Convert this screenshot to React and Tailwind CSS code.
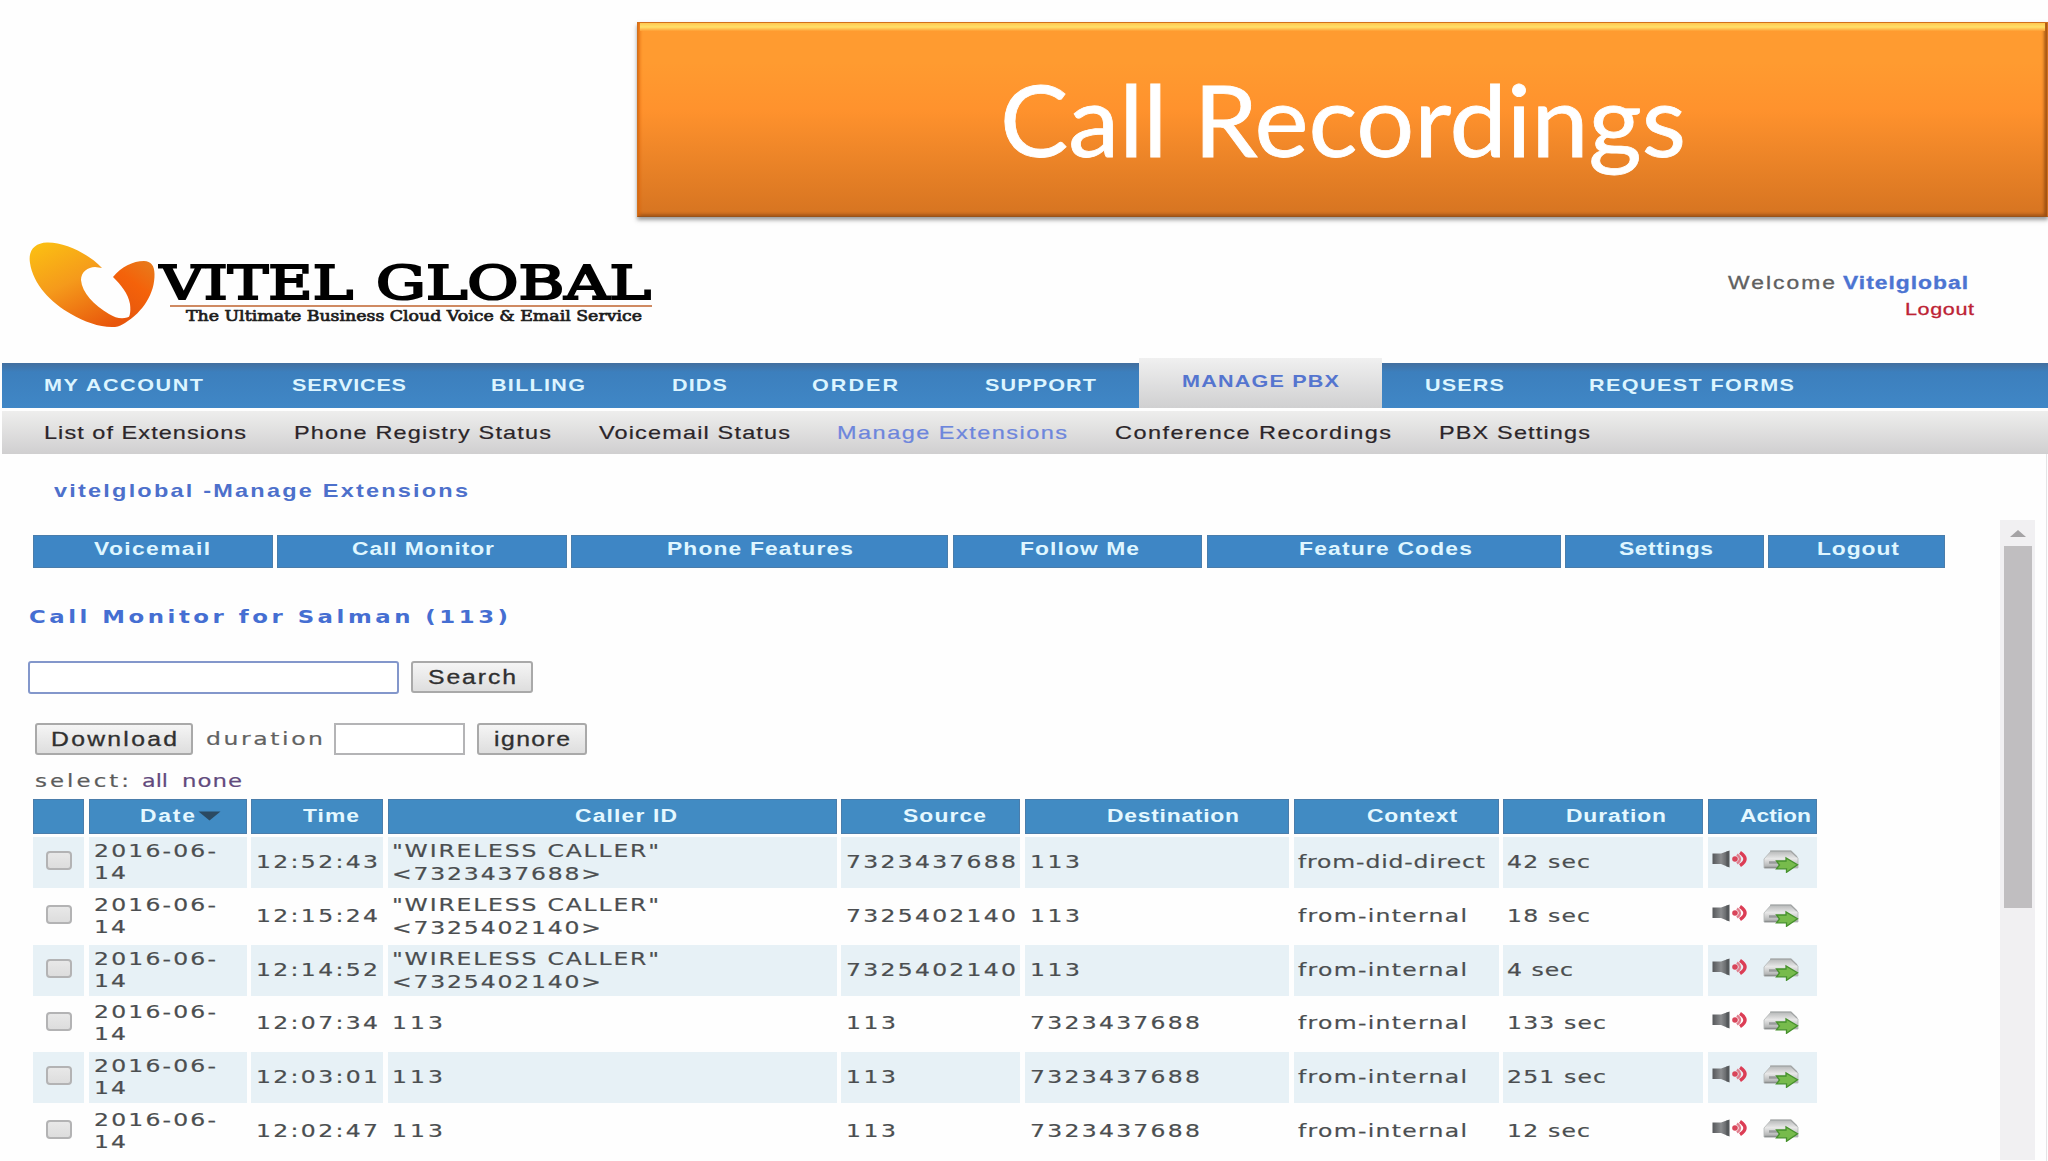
import { useId, useLayoutEffect, useRef, useState } from "react";

/* A single line of text stretched sideways to a given width. */
function Fit({ w, children, className = "", stretch = 1.27 }) {
  const ref = useRef(null);
  const [style, setStyle] = useState({});
  useLayoutEffect(() => {
    const natural = ref.current.getBoundingClientRect().width;
    const gaps = Math.max(1, String(children).length - 1);
    const spacing = Math.max(0, (w / stretch - natural) / gaps);
    setStyle({
      letterSpacing: `${spacing}px`,
      transform: `scaleX(${w / (natural + spacing * gaps)})`,
    });
  }, []);
  return (
    <span className={`block shrink-0 text-left whitespace-nowrap ${className}`} style={{ width: w }}>
      <span ref={ref} className="inline-block origin-left whitespace-pre align-top" style={style}>
        {children}
      </span>
    </span>
  );
}

const sans = "font-['Liberation_Sans',Arial,sans-serif]";
const wide = "font-['DejaVu_Sans',Verdana,sans-serif]";
const serif = "font-['DejaVu_Serif',serif]";

function LogoMark() {
  const id = useId();
  return (
    <svg className="mt-[2px] h-[88px] w-[128px] shrink-0" viewBox="0 0 128 88">
      <defs>
        <linearGradient id={id + "a"} x1="0.15" y1="0" x2="0.75" y2="1">
          <stop offset="0" stopColor="#fbbd13" />
          <stop offset="0.45" stopColor="#f59a1b" />
          <stop offset="1" stopColor="#e8560b" />
        </linearGradient>
        <linearGradient id={id + "b"} x1="0.8" y1="0" x2="0.3" y2="1">
          <stop offset="0" stopColor="#e8791a" />
          <stop offset="0.4" stopColor="#f4620a" />
          <stop offset="1" stopColor="#e5560e" />
        </linearGradient>
      </defs>
      <path
        d="M73 27C60 13 36 1 18 1.500C5 2-1 10 1 22C4 43 22 62 42 73C56 81 72 87 86 86C94 85 99 80 103 74C96 79 88 78 80 73C65 64 53 52 52 39C52 31 59 26 66 26Z"
        fill={`url(#${id}a)`}
      />
      <path
        d="M84 36C92 26 104 20 115 20C122 20 125.500 25 125.500 33C126 52 114 71 96 82C101 77 102 71 101 63C99 52 92 44 84 36Z"
        fill={`url(#${id}b)`}
      />
    </svg>
  );
}

function Speaker() {
  const id = useId();
  return (
    <svg className="h-[18px] w-[36px]" viewBox="0 0 36 18">
      <defs>
        <linearGradient id={id} x1="0" x2="1">
          <stop offset="0" stopColor="#55575a" />
          <stop offset="0.5" stopColor="#8b8d8f" />
          <stop offset="1" stopColor="#505356" />
        </linearGradient>
      </defs>
      <path d="M0.500 3.500H9L17.500 0.500V17.500L9 14H0.500Z" fill={`url(#${id})`} />
      <path d="M15.500 1.500V16.500" stroke="#55585b" strokeWidth="2" />
      <circle cx="23" cy="9" r="2.800" fill="#d9455a" />
      <path d="M25 4.500Q31 9 25 13.500" fill="none" stroke="#e07c8b" strokeWidth="2.500" />
      <path d="M28 2.500Q38 9 28 15.500" fill="none" stroke="#dc3d55" strokeWidth="3.500" />
    </svg>
  );
}

function DriveArrow() {
  const id = useId();
  return (
    <svg className="h-[23px] w-[36px]" viewBox="0 0 36 23">
      <defs>
        <linearGradient id={id} x1="0" y1="0" x2="0" y2="1">
          <stop offset="0" stopColor="#b5b7b7" />
          <stop offset="0.45" stopColor="#e8e8e8" />
          <stop offset="1" stopColor="#a8aaaa" />
        </linearGradient>
      </defs>
      <path d="M8 1H28L35 8V18H1V9Z" fill={`url(#${id})`} stroke="#b4b7b7" strokeWidth="0.800" />
      <path d="M7 1.200H28L34 7" fill="none" stroke="#a3a6a6" strokeWidth="1.300" />
      <path d="M1.500 17.500H18" stroke="#8d9090" strokeWidth="1.500" />
      <path d="M6 12.500H15" stroke="#989b9b" strokeWidth="2.500" />
      <path
        d="M13.500 11H23V8L34.500 14.800L23.500 22.300V18.800H13.500L16.500 15Z"
        fill="#77bb4c"
        stroke="#46912c"
        strokeWidth="1.300"
      />
    </svg>
  );
}

function Banner() {
  return (
    <header className="relative ml-[637px] h-[195px] border border-[#d2701b] border-b-[#98531b] bg-linear-to-b from-[#ff9b30] from-20% via-[#ff922d] via-45% to-[#d67421] shadow-[0_3px_4px_rgba(60,60,60,0.5),inset_3px_0_3px_-1px_rgba(220,100,10,0.7),inset_-4px_0_3px_-1px_rgba(150,75,15,0.8),inset_0_-3px_3px_-1px_rgba(150,80,25,0.7)]">
      <div className="mx-[2px] h-[8px] bg-linear-to-b from-[#ffc64e] via-[#ffe068] to-[#ff9e34]" />
      <div className="pl-[362px]">
        <Fit w={686} stretch={1.1} className="mt-[29px] font-['Lato','Open_Sans',sans-serif] text-[99px] leading-[118px] text-white [-webkit-text-stroke:0.8px]">
          Call Recordings
        </Fit>
      </div>
    </header>
  );
}

function Brand() {
  return (
    <div className="flex h-[141px] pt-[22px] pl-[29px]">
      <LogoMark />
      <div className="ml-[3px] pt-[16px]">
        <div className={`flex gap-[23px] ${serif} text-[47px] leading-[56px] text-black [-webkit-text-stroke:2.2px]`}>
          <Fit w={193} stretch={1.5}>VITEL</Fit>
          <Fit w={275} stretch={1.5}>GLOBAL</Fit>
        </div>
        <div className="-mt-[6px] ml-[10px] h-[2px] w-[482px] bg-[#cf8a62]" />
        <div className={`ml-[26px] ${serif} text-[15px] leading-[18px] text-[#1c1c1c] [-webkit-text-stroke:0.7px]`}>
          <Fit w={456}>{"The Ultimate Business Cloud Voice & Email Service"}</Fit>
        </div>
      </div>
      <div className={`mr-[74px] ml-auto flex flex-col items-end pt-[34px] ${sans} text-[18px] leading-[20px] [-webkit-text-stroke:0.3px]`}>
        <div className="mr-[6px] flex gap-[8px]">
          <Fit w={107} className="text-[#606060]">Welcome</Fit>
          <Fit w={125} className="font-bold text-[#4c74d2]">Vitelglobal</Fit>
        </div>
        <Fit w={69} className="mt-[7px] text-[17px] text-[#bd2335]">Logout</Fit>
      </div>
    </div>
  );
}

function NavText({ w, ml, children }) {
  return (
    <div className={ml}>
      <Fit w={w}>{children}</Fit>
    </div>
  );
}

function MainNav() {
  return (
    <nav className={`ml-[2px] flex h-[50px] items-end ${sans} text-[17px] leading-[18px] font-bold text-[#dcf5ff]`}>
      <div className="flex h-[45px] w-[1137px] bg-linear-to-b from-[#426f9f] via-[#3c7fbd] via-20% to-[#4087c6] pt-[14px]">
        <NavText ml="ml-[42px]" w={159}>MY ACCOUNT</NavText>
        <NavText ml="ml-[89px]" w={114}>SERVICES</NavText>
        <NavText ml="ml-[85px]" w={94}>BILLING</NavText>
        <NavText ml="ml-[87px]" w={55}>DIDS</NavText>
        <NavText ml="ml-[85px]" w={86}>ORDER</NavText>
        <NavText ml="ml-[87px]" w={111}>SUPPORT</NavText>
      </div>
      <div className="h-[50px] w-[243px] bg-linear-to-b from-[#f0f0f0] to-[#d0d0d1] pt-[15px] pl-[43px] text-[#5575cf]">
        <Fit w={157}>MANAGE PBX</Fit>
      </div>
      <div className="flex h-[45px] flex-1 bg-linear-to-b from-[#426f9f] via-[#3c7fbd] via-20% to-[#4087c6] pt-[14px]">
        <NavText ml="ml-[43px]" w={79}>USERS</NavText>
        <NavText ml="ml-[85px]" w={205}>REQUEST FORMS</NavText>
      </div>
    </nav>
  );
}

function SubNav() {
  return (
    <nav className={`mt-[3px] ml-[2px] flex h-[43px] bg-linear-to-b from-[#eeeeed] to-[#d0cfd0] pt-[12px] ${sans} text-[18.500px] leading-[20px] text-[#2b2529] [-webkit-text-stroke:0.2px]`}>
      <NavText ml="ml-[42px]" w={202}>List of Extensions</NavText>
      <NavText ml="ml-[48px]" w={257}>Phone Registry Status</NavText>
      <NavText ml="ml-[48px]" w={191}>Voicemail Status</NavText>
      <div className="ml-[47px] text-[#6d86dc]">
        <Fit w={230}>Manage Extensions</Fit>
      </div>
      <NavText ml="ml-[48px]" w={276}>Conference Recordings</NavText>
      <NavText ml="ml-[48px]" w={151}>PBX Settings</NavText>
    </nav>
  );
}

const tabs = [
  { label: "Voicemail", pad: 60, w: 116 },
  { label: "Call Monitor", pad: 74, w: 142 },
  { label: "Phone Features", pad: 95, w: 186 },
  { label: "Follow Me", pad: 66, w: 119 },
  { label: "Feature Codes", pad: 91, w: 173 },
  { label: "Settings", pad: 53, w: 94 },
  { label: "Logout", pad: 48, w: 82 },
];

function TabBar() {
  return (
    <div className={`grid h-[33px] w-[1912px] grid-cols-[239.500px_290px_377px_249.500px_354px_199px_176.500px] gap-x-[4.400px] ${sans} text-[18px] leading-[20px] font-bold text-[#dff6ff]`}>
      {tabs.map((t) => (
        <div key={t.label} className="border border-[#4a7dab] bg-[#3e86c5] pt-[3px]">
          <div style={{ marginLeft: t.pad }}>
            <Fit w={t.w}>{t.label}</Fit>
          </div>
        </div>
      ))}
    </div>
  );
}

function Button({ w, textW, children }) {
  return (
    <button
      className={`flex h-[32px] shrink-0 items-center justify-center rounded-[3px] border-2 border-[#a9a9a9] bg-linear-to-b from-[#f5f5f5] to-[#dedede] ${sans} text-[19.500px] leading-[22px] text-[#303030] [-webkit-text-stroke:0.3px]`}
      style={{ width: w }}
    >
      <Fit w={textW}>{children}</Fit>
    </button>
  );
}

const headers = [
  { label: "Date", pad: 51, w: 55, sort: true },
  { label: "Time", pad: 52, w: 56 },
  { label: "Caller ID", pad: 187, w: 102 },
  { label: "Source", pad: 62, w: 83 },
  { label: "Destination", pad: 82, w: 132 },
  { label: "Context", pad: 73, w: 90 },
  { label: "Duration", pad: 63, w: 100 },
  { label: "Action", pad: 32, w: 71 },
];

const calls = [
  { time: "12:52:43", wireless: "7323437688", source: "7323437688", dest: "113", ctx: "from-did-direct", dur: "42 sec" },
  { time: "12:15:24", wireless: "7325402140", source: "7325402140", dest: "113", ctx: "from-internal", dur: "18 sec" },
  { time: "12:14:52", wireless: "7325402140", source: "7325402140", dest: "113", ctx: "from-internal", dur: "4 sec" },
  { time: "12:07:34", source: "113", dest: "7323437688", ctx: "from-internal", dur: "133 sec" },
  { time: "12:03:01", source: "113", dest: "7323437688", ctx: "from-internal", dur: "251 sec" },
  { time: "12:02:47", source: "113", dest: "7323437688", ctx: "from-internal", dur: "12 sec" },
];

const columns = "grid grid-cols-[51px_158px_132px_449px_179px_264.500px_205px_200px_109px] gap-x-[4.500px] w-[1784px]";
const durationWidth = { 5: 66, 6: 83, 7: 99 };

function CallRow({ call, shaded }) {
  const cell = `flex h-[51px] ${shaded ? "bg-[#e7f1f6]" : ""}`;
  const single = "pt-[14px]";
  return (
    <div className={`${columns} mb-[2.800px] ${wide} text-[18.500px] leading-[22px] text-[#4b4e50] [-webkit-text-stroke:0.2px]`}>
      <div className={`${cell} pt-[14px] pl-[13px]`}>
        <div className="h-[19px] w-[26px] rounded-[4px] border-2 border-[#b3b3b4] bg-linear-to-b from-[#e8e8e8] to-[#dddddd]" />
      </div>
      <div className={`${cell} flex-col pt-[3px] pl-[5px]`}>
        <Fit w={122}>2016-06-</Fit>
        <Fit w={32}>14</Fit>
      </div>
      <div className={`${cell} ${single} pl-[5px]`}>
        <Fit w={122}>{call.time}</Fit>
      </div>
      {call.wireless ? (
        <div className={`${cell} flex-col pt-[3px] pl-[4px]`}>
          <Fit w={267}>{'"WIRELESS CALLER"'}</Fit>
          <Fit w={209} className="mt-px">{`<${call.wireless}>`}</Fit>
        </div>
      ) : (
        <div className={`${cell} ${single} pl-[4px]`}>
          <Fit w={51}>113</Fit>
        </div>
      )}
      <div className={`${cell} ${single} pl-[5px]`}>
        <Fit w={call.source.length > 3 ? 170 : 50}>{call.source}</Fit>
      </div>
      <div className={`${cell} ${single} pl-[5px]`}>
        <Fit w={call.dest.length > 3 ? 170 : 50}>{call.dest}</Fit>
      </div>
      <div className={`${cell} ${single} pl-[4px]`}>
        <Fit w={call.ctx === "from-internal" ? 169 : 187}>{call.ctx}</Fit>
      </div>
      <div className={`${cell} ${single} pl-[4px]`}>
        <Fit w={durationWidth[call.dur.length]}>{call.dur}</Fit>
      </div>
      <div className={`${cell} gap-[15px] pt-[13px] pl-[4px]`}>
        <Speaker />
        <DriveArrow />
      </div>
    </div>
  );
}

function CallTable() {
  return (
    <div>
      <div className={`${columns} mb-[3px] h-[35px] ${sans} text-[18px] leading-[20px] font-bold text-[#e4f8ff]`}>
        <div className="border border-[#4a7dab] bg-[#418bc3]" />
        {headers.map((h) => (
          <div key={h.label} className="border border-[#4a7dab] bg-[#418bc3] pt-[6px]">
            <div className="flex" style={{ marginLeft: h.pad - 1 }}>
              <Fit w={h.w}>{h.label}</Fit>
              {h.sort && (
                <svg className="mt-[5px] ml-[3px] h-[10px] w-[23px]" viewBox="0 0 23 10">
                  <path d="M0.500 0.500H22.500L11.500 9.500Z" fill="#2b4a62" />
                </svg>
              )}
            </div>
          </div>
        ))}
      </div>
      {calls.map((c, i) => (
        <CallRow key={c.time} call={c} shaded={i % 2 === 0} />
      ))}
    </div>
  );
}

function ScrollBar() {
  return (
    <div className="mt-[66px] ml-auto h-[640px] w-[35px] shrink-0 bg-[#f1f0f2]">
      <div className="flex h-[26px] justify-center pt-[10px]">
        <svg className="h-[7px] w-[16px]" viewBox="0 0 16 7">
          <path d="M8 0L16 7H0Z" fill="#a5a3a5" />
        </svg>
      </div>
      <div className="mx-auto h-[362px] w-[28px] bg-[#c0bec0]" />
    </div>
  );
}

export default function App() {
  return (
    <div className="h-[1161px] w-[2048px] overflow-hidden bg-[#fefefe] pt-[22px]">
      <Banner />
      <Brand />
      <MainNav />
      <SubNav />
      <div className="mr-px flex h-[707px] border-r border-[#e4e4e6]">
        <main className="pt-[27px] pl-[33px]">
          <Fit w={414} className={`ml-[21px] ${sans} text-[18.500px] leading-[20px] font-bold text-[#4d70cb]`}>
            vitelglobal -Manage Extensions
          </Fit>
          <div className="mt-[34px]">
            <TabBar />
          </div>
          <Fit w={479} className={`mt-[38px] -ml-[4px] ${wide} text-[18px] leading-[22px] font-bold text-[#456ed2]`}>
            Call Monitor for Salman (113)
          </Fit>
          <div className="mt-[33px] -ml-[5px] flex gap-[12px]">
            <div className="h-[33px] w-[371px] rounded-[3px] border-2 border-[#8397cb] bg-white" />
            <Button w={122} textW={88}>Search</Button>
          </div>
          <div className="mt-[29px] ml-[2px] flex">
            <Button w={158} textW={126}>Download</Button>
            <Fit w={117} className={`mt-[5px] ml-[13px] ${wide} text-[18.500px] leading-[22px] text-[#626262] [-webkit-text-stroke:0.2px]`}>
              duration
            </Fit>
            <div className="mr-[12px] ml-[11px] h-[32px] w-[131px] border-2 border-[#b4b4b6] bg-white" />
            <Button w={110} textW={76}>ignore</Button>
          </div>
          <div className={`mt-[15px] ml-[2px] flex ${wide} text-[18px] leading-[22px] [-webkit-text-stroke:0.2px]`}>
            <Fit w={94} className="text-[#5c5c5c]">select:</Fit>
            <Fit w={26} className="ml-[13px] text-[#624a7d]">all</Fit>
            <Fit w={60} className="ml-[14px] text-[#624a7d]">none</Fit>
          </div>
          <div className="mt-[7px]">
            <CallTable />
          </div>
        </main>
        <div className="mr-[11px] ml-auto flex">
          <ScrollBar />
        </div>
      </div>
    </div>
  );
}
